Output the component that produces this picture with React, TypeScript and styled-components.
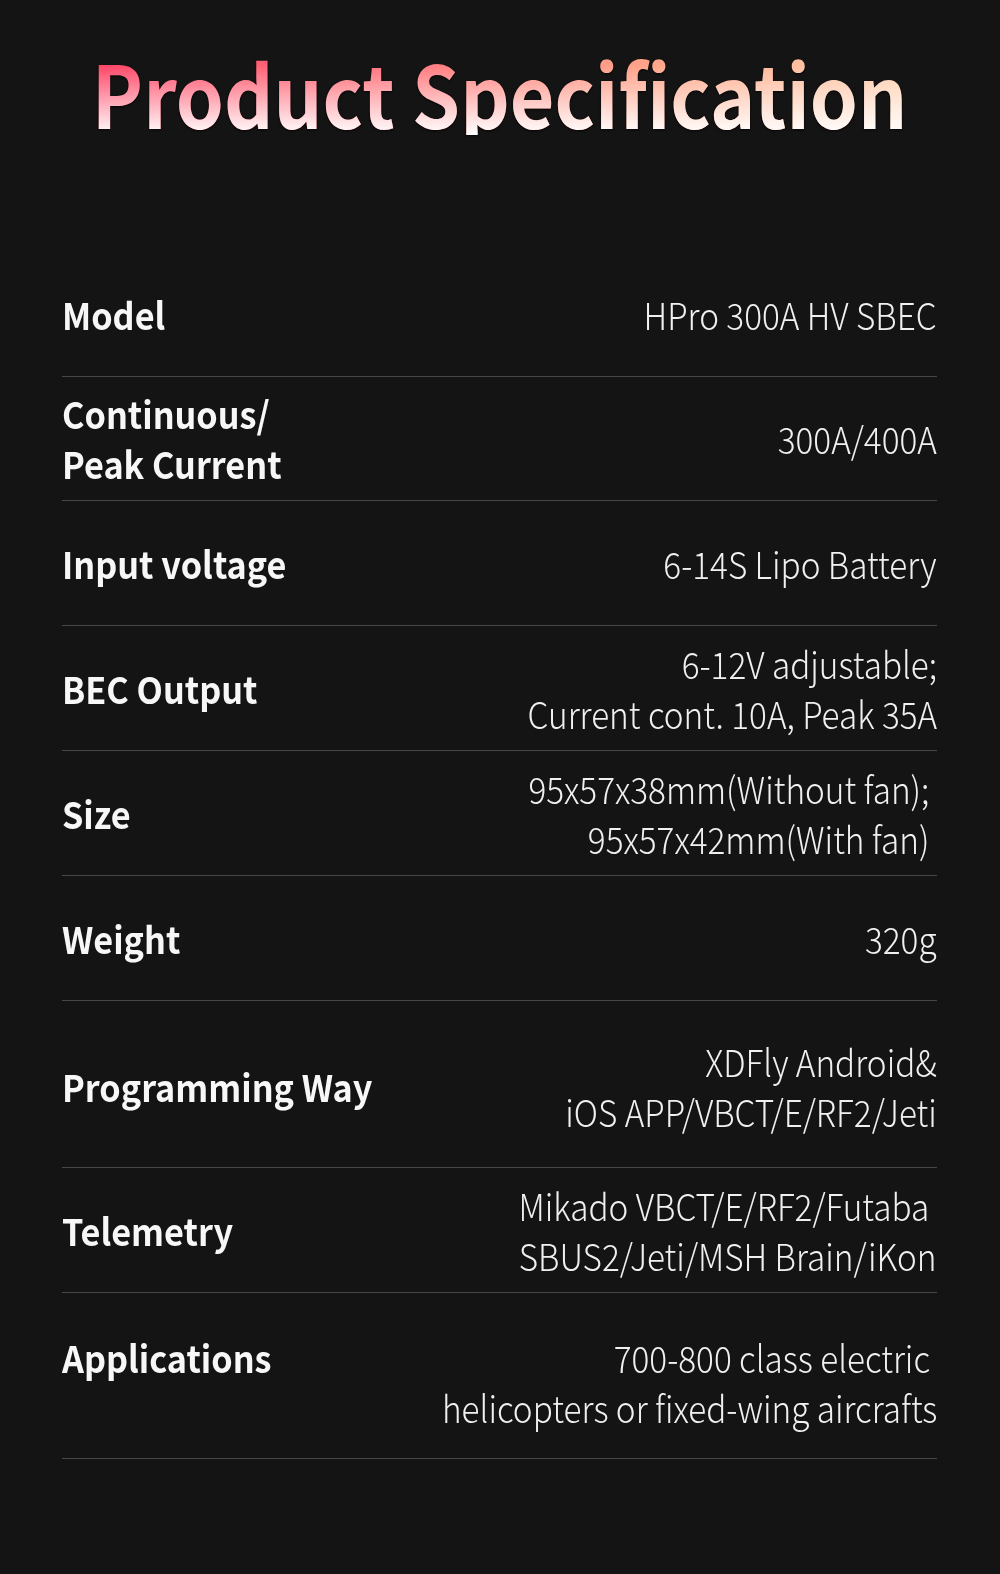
import React from "react";
import styled, { createGlobalStyle } from "styled-components";

const Global = createGlobalStyle`
  html, body {
    margin: 0;
    padding: 0;
    background: #141414;
  }
  body {
    font-family: "Noto Sans CJK SC", "Noto Sans", sans-serif;
    color: #f4f4f4;
  }
`;

const Page = styled.div`
  width: 1000px;
  min-height: 1574px;
  box-sizing: border-box;
  padding: 49px 63px 0 62px;
  background: #141414;
`;

const TitleWrap = styled.div`
  display: flex;
  justify-content: center;
  margin: 0 0 117px;
  filter: drop-shadow(0 1px 1px rgba(0, 0, 0, 0.7));
`;

const Title = styled.h1`
  margin: 0;
  white-space: nowrap;
  font-size: 86px;
  line-height: 86px;
  font-weight: 700;
  transform: scaleX(0.895);
  transform-origin: center;
  background-image: linear-gradient(180deg, rgba(255, 255, 255, 0) 18%, #ffffff 100%),
    linear-gradient(90deg, #ff4466 0%, #ff7a80 40%, #ffa68a 70%, #ffd0b0 100%);
  -webkit-background-clip: text;
  background-clip: text;
  color: transparent;
`;

const Table = styled.div`
  display: flex;
  flex-direction: column;
`;

const Row = styled.div<{ $h: number; $top?: boolean; $pt?: number }>`
  box-sizing: border-box;
  height: ${(p) => p.$h}px;
  display: flex;
  justify-content: space-between;
  align-items: ${(p) => (p.$top ? "flex-start" : "center")};
  padding-top: ${(p) => p.$pt ?? 0}px;
  border-bottom: 1px solid #474747;
`;

const Label = styled.div`
  font-size: 37px;
  line-height: 50px;
  font-weight: 700;
  color: #f7f7f7;
  transform: scaleX(0.925);
  transform-origin: left center;
`;

const Value = styled.div`
  font-size: 37px;
  line-height: 50px;
  font-weight: 200;
  color: #f0f0f0;
  text-align: right;
  transform: scaleX(0.9);
  transform-origin: right center;
`;

const Line = styled.div`
  white-space: pre;
`;

type Spec = {
  label: string[];
  value: string[];
  h: number;
  top?: boolean;
  pt?: number;
};

const specs: Spec[] = [
  { label: ["Model"], value: ["HPro 300A HV SBEC"], h: 124.7 },
  { label: ["Continuous/", "Peak Current"], value: ["300A/400A"], h: 124.3 },
  { label: ["Input voltage"], value: ["6-14S Lipo Battery"], h: 125.5 },
  { label: ["BEC Output"], value: ["6-12V adjustable;", "Current cont. 10A, Peak 35A"], h: 124.5 },
  { label: ["Size"], value: ["95x57x38mm(Without fan); ", "95x57x42mm(With fan) "], h: 125.5 },
  { label: ["Weight"], value: ["320g"], h: 124.5 },
  { label: ["Programming Way"], value: ["XDFly Android&", "iOS APP/VBCT/E/RF2/Jeti"], h: 166.6, pt: 5 },
  { label: ["Telemetry"], value: ["Mikado VBCT/E/RF2/Futaba ", "SBUS2/Jeti/MSH Brain/iKon"], h: 125.4 },
  { label: ["Applications"], value: ["700-800 class electric ", "helicopters or fixed-wing aircrafts"], h: 166, top: true, pt: 39 },
];

export default function App() {
  return (
    <>
      <Global />
      <Page>
        <TitleWrap>
          <Title>Product Specification</Title>
        </TitleWrap>
        <Table>
          {specs.map((s, i) => (
            <Row key={i} $h={s.h} $top={s.top} $pt={s.pt}>
              <Label>
                {s.label.map((l, j) => (
                  <Line key={j}>{l}</Line>
                ))}
              </Label>
              <Value>
                {s.value.map((v, j) => (
                  <Line key={j}>{v}</Line>
                ))}
              </Value>
            </Row>
          ))}
        </Table>
      </Page>
    </>
  );
}
